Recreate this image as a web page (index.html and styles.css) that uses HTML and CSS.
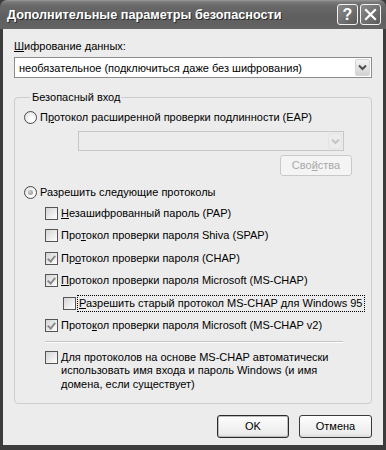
FILE: index.html
```html
<!DOCTYPE html>
<html lang="ru">
<head>
<meta charset="utf-8">
<title>Дополнительные параметры безопасности</title>
<link rel="stylesheet" href="styles.css">
</head>
<body>
<div class="window">
  <div class="titlebar">
    <span class="title">Дополнительные параметры безопасности</span>
    <div class="tbtns">
      <span class="tbtn help">?</span>
      <span class="tbtn close"><svg width="13" height="13" viewBox="0 0 13 13"><path d="M2 2 L11 11 M11 2 L2 11" stroke="#fff" stroke-width="2.2" stroke-linecap="square"/></svg></span>
    </div>
  </div>
  <div class="body">
    <div class="label"><u>Ш</u>ифрование данных:</div>
    <div class="combo">
      <span class="combo-text">необязательное (подключиться даже без шифрования)</span>
      <span class="drop"><svg width="9" height="7" viewBox="0 0 9 7"><path d="M1 1.5 L4.5 5 L8 1.5" fill="none" stroke="#4d4d4d" stroke-width="2"/></svg></span>
    </div>
    <fieldset class="group">
      <legend>Безопасный вход</legend>
      <div class="row r-eap"><span class="radio"></span><span class="txt">П<u>р</u>отокол расширенной проверки подлинности (EAP)</span></div>
      <div class="combo dis-combo">
        <span class="combo-text"></span>
        <span class="drop dis"><svg width="9" height="7" viewBox="0 0 9 7"><path d="M1 1.5 L4.5 5 L8 1.5" fill="none" stroke="#c4c4c4" stroke-width="2"/></svg></span>
      </div>
      <div class="btn dis-btn">Сво<u>й</u>ства</div>
      <div class="row r-allow"><span class="radio on"></span><span class="txt">Разрешить сле<u>д</u>ующие протоколы</span></div>
      <div class="checks">
        <div class="row crow"><span class="cb"></span><span class="txt"><u>Н</u>езашифрованный пароль (PAP)</span></div>
        <div class="row crow"><span class="cb"></span><span class="txt">Про<u>т</u>окол проверки пароля Shiva (SPAP)</span></div>
        <div class="row crow"><span class="cb on"></span><span class="txt">Пр<u>о</u>токол проверки пароля (CHAP)</span></div>
        <div class="row crow"><span class="cb on"></span><span class="txt"><u>П</u>ротокол проверки пароля Microsoft (MS-CHAP)</span></div>
        <div class="row crow sub"><span class="cb"></span><span class="txt focus"><u>Р</u>азрешить старый протокол MS-CHAP для Windows 95</span></div>
        <div class="row crow"><span class="cb on"></span><span class="txt">Прото<u>к</u>ол проверки пароля Microsoft (MS-CHAP v2)</span></div>
      </div>
      <div class="sep"></div>
      <div class="row multi"><span class="cb"></span><span class="txt"><u>Д</u>ля протоколов на основе MS-CHAP автоматически<br>использовать имя входа и пароль Windows (и имя<br>домена, если существует)</span></div>
    </fieldset>
    <div class="buttons">
      <div class="btn def">OK</div>
      <div class="btn">Отмена</div>
    </div>
  </div>
</div>
</body>
</html>
```
FILE: styles.css
```css
html, body {
  margin: 0;
  padding: 0;
  background: #3a3a3a;
}
.window {
  width: 386px;
  height: 450px;
  box-sizing: border-box;
  background: #3c3c3c;
  display: flex;
  flex-direction: column;
  font-family: "Liberation Sans", Arial, sans-serif;
  font-size: 11px;
  color: #000;
}
.titlebar {
  height: 29px;
  flex: none;
  background: linear-gradient(#9a9a9a 0, #7a7a7a 2px, #686868 6px, #5e5e5e 60%, #646464 100%);
  border-radius: 7px 7px 0 0;
  display: flex;
  align-items: center;
  padding: 0 5px 0 7px;
}
.title {
  flex: 1;
  color: #fff;
  font-weight: bold;
  font-size: 12.7px;
  text-shadow: 1px 1px 0 #2a2a2a;
  white-space: nowrap;
  padding-top: 1px;
}
.tbtns {
  display: flex;
  gap: 2px;
}
.tbtn {
  width: 21px;
  height: 21px;
  box-sizing: border-box;
  border: 1px solid #f2f2f2;
  border-radius: 3px;
  background: linear-gradient(135deg, #8a8a8a, #5a5a5a);
  color: #fff;
  display: flex;
  align-items: center;
  justify-content: center;
}
.help {
  font-weight: bold;
  font-size: 16px;
  line-height: 1;
}
.body {
  flex: 1;
  background: #ececec;
  margin: 0 3px 5px 3px;
  padding: 11px 11px 0 11px;
  display: flex;
  flex-direction: column;
}
.label {
  line-height: 13px;
  height: 13px;
}
u { text-decoration: underline; text-underline-offset: 1px; }
.combo {
  margin-top: 4px;
  height: 21px;
  box-sizing: border-box;
  border: 1px solid #8c8c8c;
  background: #fff;
  display: flex;
  align-items: center;
  padding: 0 1px 0 4px;
}
.combo-text {
  flex: 1;
  white-space: nowrap;
}
.drop {
  width: 15px;
  height: 17px;
  box-sizing: border-box;
  border: 1px solid #d6d6d6;
  border-radius: 2px;
  background: linear-gradient(#f4f4f4, #d2d2d2);
  display: flex;
  align-items: center;
  justify-content: center;
}
.drop.dis {
  background: #ececec;
  border-color: #e4e4e4;
}
.group {
  margin: 12px 0 0 0;
  padding: 0 0 12px 9px;
  border: 1px solid #cdcdcd;
  border-radius: 4px;
  min-width: 0;
}
.group legend {
  margin-left: 6px;
  padding: 0 1px 0 2px;
  line-height: 14px;
  color: #000;
}
.row {
  display: flex;
  align-items: center;
  height: 16px;
}
.txt { white-space: nowrap; line-height: 13px; }
.radio {
  width: 13px;
  height: 13px;
  box-sizing: border-box;
  border: 1px solid #4a4a4a;
  border-radius: 50%;
  background: radial-gradient(circle at 65% 65%, #fff 20%, #d8d8d8 100%);
  margin-right: 3px;
  flex: none;
  position: relative;
}
.radio.on::after {
  content: "";
  position: absolute;
  left: 3px;
  top: 3px;
  width: 5px;
  height: 5px;
  border-radius: 50%;
  background: radial-gradient(circle at 40% 40%, #d0d0d0, #8a8a8a);
}
.r-eap { margin-top: 5px; }
.dis-combo {
  margin: 6px 0 0 54px;
  width: 266px;
  height: 20px;
  border-color: #c7c7c7;
  background: #ececec;
}
.dis-combo .drop { height: 16px; width: 14px; }
.btn {
  width: 72px;
  height: 23px;
  box-sizing: border-box;
  border: 1px solid #3a3a3a;
  border-radius: 3px;
  background: linear-gradient(#fdfdfd, #ececec 85%, #d8d8d8);
  display: flex;
  align-items: center;
  justify-content: center;
  line-height: 13px;
}
.dis-btn {
  margin: 4px 0 0 256px;
  width: 72px;
  height: 21px;
  border-color: #c9c9c9;
  background: #f4f4f4;
  color: #a8a8a8;
}
.r-allow { margin-top: 8px; }
.checks {
  display: flex;
  flex-direction: column;
  gap: 6.6px;
  margin: 5px 0 0 21px;
}
.cb {
  width: 13px;
  height: 13px;
  box-sizing: border-box;
  border: 1px solid #555;
  background: linear-gradient(135deg, #d4d4d4, #fafafa 90%);
  margin-right: 3px;
  flex: none;
  position: relative;
}
.cb.on::after {
  content: "";
  position: absolute;
  left: 3px;
  top: 1px;
  width: 3px;
  height: 6px;
  border: solid #8a8a8a;
  border-width: 0 2px 2px 0;
  transform: rotate(40deg);
}
.sub { margin-left: 18px; }
.focus {
  outline: 1px dotted #000;
  outline-offset: 1px;
  padding-right: 1px;
}
.sep {
  margin: 7px 0 0 21px;
  width: 298px;
  height: 1px;
  background: #c4c4c4;
  border-bottom: 1px solid #fff;
}
.multi {
  height: auto;
  align-items: flex-start;
  margin: 8px 0 0 21px;
}
.multi .txt {
  line-height: 13.5px;
}
.buttons {
  display: flex;
  justify-content: flex-end;
  gap: 10px;
  margin-top: 11px;
}
.buttons .btn:last-child { width: 73px; }
.btn.def { border-color: #2a2a2a; box-shadow: inset 0 0 0 1px #bcbcbc; }
```
